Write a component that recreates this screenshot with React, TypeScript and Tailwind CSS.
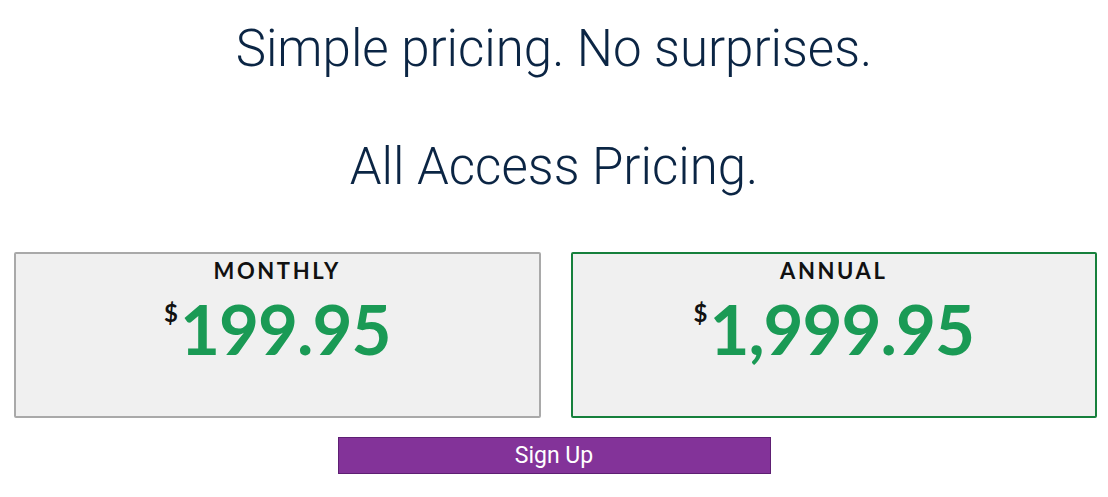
const heading = "font-['Roboto',_'Liberation_Sans',_sans-serif] font-light text-[#0b2544]";
const price = "font-['Lato',_'Liberation_Sans',_sans-serif]";

function PlanCard({ label, amount, border }: { label: string; amount: string; border: string }) {
  return (
    <div className={`flex-1 h-[166px] bg-[#f0f0f0] border-2 rounded-[2px] flex flex-col items-center pt-[3px] ${border}`}>
      <div className={`${price} font-bold text-[22px] leading-[28px] tracking-[2.6px] text-[#111]`}>{label}</div>
      <div className={`${price} flex items-start mt-[13px]`}>
        <span className="font-bold text-[24px] leading-none text-[#111] mt-[3px] mr-[2px]">$</span>
        <span className="font-bold text-[69px] leading-[62px] text-[#1a9a55] tracking-[-1px]">{amount}</span>
      </div>
    </div>
  );
}

export default function App() {
  return (
    <div className="w-full min-h-[497px] bg-white flex flex-col items-center">
      <h1 className={`${heading} text-[51px] leading-[60px] mt-[19px]`}>Simple pricing. No surprises.</h1>
      <h2 className={`${heading} text-[51px] leading-[60px] mt-[58px]`}>All Access Pricing.</h2>
      <div className="w-full flex gap-[30px] pl-[14px] pr-[11px] mt-[55px]">
        <PlanCard label="MONTHLY" amount="199.95" border="border-[#a9a9a9]" />
        <PlanCard label="ANNUAL" amount="1,999.95" border="border-[#16803c]" />
      </div>
      <button className="mt-[19px] w-[433px] h-[37px] bg-[#833399] border border-[#5e1f73] text-white text-[23px] leading-none font-['Roboto',_sans-serif]">
        Sign Up
      </button>
    </div>
  );
}
